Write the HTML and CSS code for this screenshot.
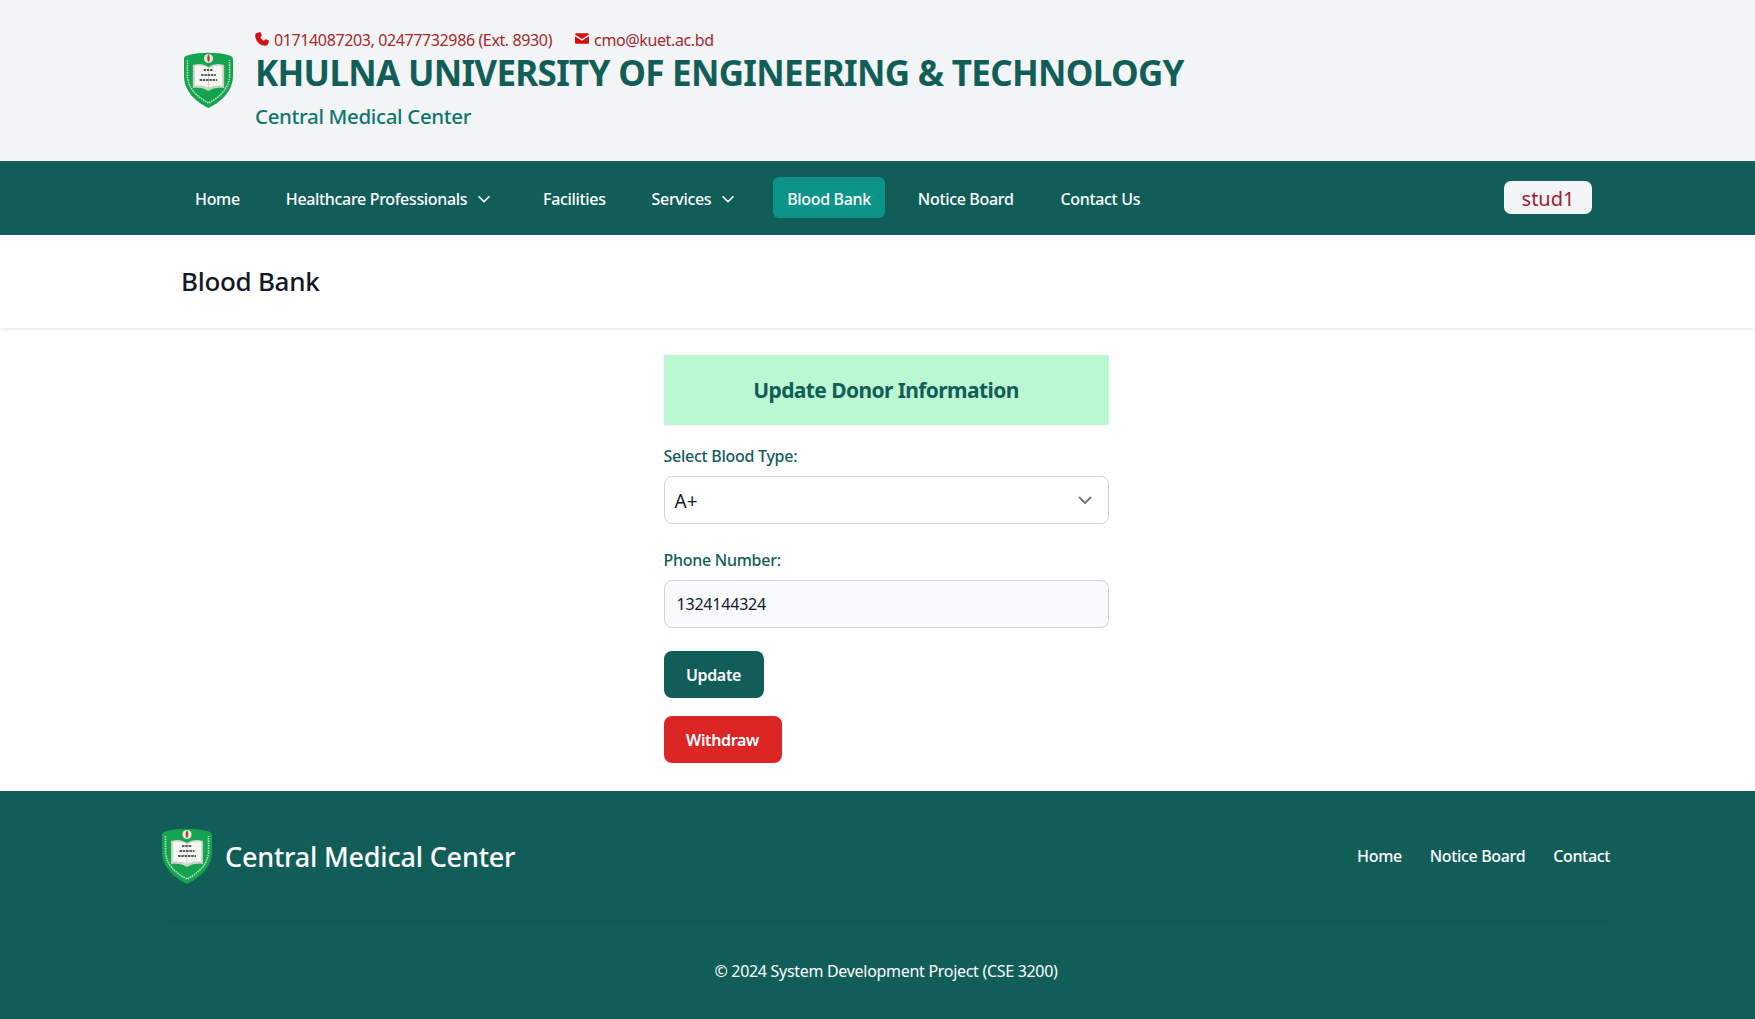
FILE: index.html
```html
<!DOCTYPE html>
<html lang="en">
<head>
<meta charset="utf-8">
<title>Blood Bank</title>
<link rel="stylesheet" href="styles.css">
</head>
<body>
<svg class="defs" width="0" height="0" aria-hidden="true">
  <symbol id="crest" viewBox="0 0 50 56" preserveAspectRatio="none">
    <path d="M5 3 C16 0 34 0 45 3 C49 4 50 5 50 8 L50 24 C50 40 36 51 25 56 C14 51 0 40 0 24 L0 8 C0 5 1 4 5 3Z" fill="#16a34f"/>
    <path d="M3.5 8 L3.5 25 C5 38 15 46 25 51 C35 46 45 38 46.5 25 L46.5 8" fill="none" stroke="#c9ecd3" stroke-width="1.6" stroke-dasharray="1.6 .8" opacity=".85"/>
    <circle cx="25" cy="6.5" r="4.6" fill="#d7efdc"/>
    <path d="M9 13 C15 11 21 12 25 15 C29 12 35 11 41 13 L41 36 C35 35 29 36 25 39 C21 36 15 35 9 36Z" fill="#c9d2c9"/>
    <path d="M11 14 C16 13 21 14 24.5 16 L24.5 35.5 C21 34 16 33 11 34Z" fill="#f6f6f2"/>
    <path d="M39 14 C34 13 29 14 25.500 16 L25.500 35.500 C29 34 34 33 39 34Z" fill="#f6f6f2"/>
    <path d="M20 18 H30 M17.500 23 H32.500 M16 28 H34" stroke="#5a5a5a" stroke-width="2" stroke-dasharray="2.500 .8"/>
    <path d="M25 2 C26.800 4.500 26.800 8 25 10.500 C23.200 8 23.200 4.500 25 2Z" fill="#c8322e"/>
  </symbol>
  <symbol id="chev" viewBox="0 0 20 20">
    <path d="M4.500 7.500 L10 13 L15.500 7.500" fill="none" stroke="currentColor" stroke-width="1.800" stroke-linecap="round" stroke-linejoin="round"/>
  </symbol>
</svg>

<header class="top">
  <svg class="crest"><use href="#crest"/></svg>
  <div class="top-text">
    <div class="contact">
      <span class="contact-item">
        <svg class="ci ci-phone" viewBox="0 0 16 16"><path d="M3.600.6 L5.600.2 C6 .1 6.300.3 6.500.7 L7.700 3.600 C7.900 4 7.800 4.300 7.500 4.600 L6 5.800 C6.800 7.600 8.400 9.200 10.200 10 L11.400 8.500 C11.700 8.200 12 8.100 12.400 8.300 L15.300 9.500 C15.700 9.700 15.900 10 15.800 10.400 L15.400 12.400 C15 14.600 13.600 15.800 11.800 15.800 C5.500 15.400 .6 10.500.2 4.200 C.2 2.400 1.400 1 3.600.6Z"/></svg>
        01714087203, 02477732986 (Ext. 8930)
      </span>
      <span class="contact-item">
        <svg class="ci ci-mail" viewBox="0 0 16 12"><path d="M1.500 0 H14.500 C15.300 0 16 .7 16 1.500 L8 6.600 L0 1.500 C0 .7 .7 0 1.500 0Z M0 3.400 L8 8.500 L16 3.400 V10.500 C16 11.300 15.300 12 14.500 12 H1.500 C.7 12 0 11.300 0 10.500Z"/></svg>
        cmo@kuet.ac.bd
      </span>
    </div>
    <h1 class="uni">KHULNA UNIVERSITY OF ENGINEERING &amp; TECHNOLOGY</h1>
    <p class="sub">Central Medical Center</p>
  </div>
</header>

<nav class="nav">
  <ul class="menu">
    <li class="item">Home</li>
    <li class="item item-hp">Healthcare Professionals <svg class="chev"><use href="#chev"/></svg></li>
    <li class="item">Facilities</li>
    <li class="item item-sv">Services <svg class="chev"><use href="#chev"/></svg></li>
    <li class="item active">Blood Bank</li>
    <li class="item item-nb">Notice Board</li>
    <li class="item">Contact Us</li>
  </ul>
  <span class="user">stud1</span>
</nav>

<section class="title-bar"><h2 class="page-title">Blood Bank</h2></section>

<main class="main">
  <form class="card">
    <h3 class="card-head">Update Donor Information</h3>
    <label class="lbl lbl-first" for="bt">Select Blood Type:</label>
    <div class="select-box" id="bt"><span>A+</span><svg class="sel-chev"><use href="#chev"/></svg></div>
    <label class="lbl" for="ph">Phone Number:</label>
    <input class="field" id="ph" type="text" value="1324144324">
    <div class="actions">
      <button class="btn btn-up" type="button">Update</button>
      <button class="btn btn-wd" type="button">Withdraw</button>
    </div>
  </form>
</main>

<footer class="foot">
  <div class="foot-row">
    <div class="foot-brand">
      <svg class="crest crest-foot"><use href="#crest"/></svg>
      <span class="foot-name">Central Medical Center</span>
    </div>
    <div class="foot-links"><a>Home</a><a>Notice Board</a><a>Contact</a></div>
  </div>
  <div class="copy">© 2024 System Development Project (CSE 3200)</div>
</footer>
</body>
</html>
```
FILE: styles.css
```css
* { box-sizing: border-box; }
html, body { margin: 0; padding: 0; }
body { font-family: "Noto Sans", "Open Sans", sans-serif; background: #fff; color: #111827; height: 1019px; overflow: hidden; }
.defs { position: absolute; }
.top { height: 160.5px; background: #f3f4f6; display: flex; align-items: flex-start; padding: 30px 0 0 184px; }
.crest { width: 49px; height: 56px; flex: none; }
.top .crest { margin-top: 22px; }
.top-text { margin-left: 22px; }
.contact { display: flex; gap: 23px; font-size: 16px; line-height: 20px; color: #a5282c; letter-spacing: -0.38px; }
.contact-item { display: flex; align-items: center; gap: 5px; }
.ci { fill: #d50e12; flex: none; }
.ci-phone { width: 14px; height: 14px; margin-top: -3px; }
.ci-mail { width: 14px; height: 11px; margin-top: -4px; }
.uni { margin: 1px 0 0; font-size: 35px; line-height: 44px; font-weight: 700; color: #115e59; white-space: nowrap; letter-spacing: -0.7px; }
.sub { margin: 8px 0 0; font-size: 20.5px; line-height: 26px; font-weight: 500; color: #0f766e; letter-spacing: -0.35px; }
.nav { height: 74px; background: #115e59; display: flex; align-items: center; justify-content: space-between; padding: 0 163px 0 181px; }
.menu { list-style: none; margin: 0; padding: 0; display: flex; gap: 18px; align-items: center; color: #fff; font-size: 16px; font-weight: 500; letter-spacing: -0.33px; }
.item { height: 41px; padding: 2px 14px 0; display: flex; align-items: center; border-radius: 6px; white-space: pre; }
.item-hp { padding-right: 18px; }
.item-sv { padding-right: 18px; }
.item-nb { padding-left: 15px; padding-right: 15px; }
.chev { width: 18px; height: 18px; margin-left: 4px; }
.active { background: #0d9488; }
.user { width: 88px; height: 33px; padding-top: 1px; background: #f3f4f6; color: #9b2230; border-radius: 7px; display: flex; align-items: center; justify-content: center; font-size: 20px; }
.title-bar { height: 93px; padding: 0 181px; display: flex; align-items: center; box-shadow: 0 1px 4px rgba(0,0,0,.1); }
.page-title { margin: 0; font-size: 26px; font-weight: 500; color: #111827; letter-spacing: -0.3px; }
.main { height: 463px; padding: 27px 0 0 17px; display: flex; justify-content: center; }
.card { width: 445px; }
.card-head { margin: 0; height: 70px; background: #bbf7d0; color: #115e59; font-size: 21px; font-weight: 700; display: flex; align-items: center; justify-content: center; letter-spacing: -0.6px; }
.lbl { display: block; font-size: 16px; line-height: 20px; font-weight: 500; color: #115e59; margin-top: 26px; margin-bottom: 10px; letter-spacing: -0.27px; }
.lbl-first { margin-top: 21px; }
.select-box { height: 48px; border: 1px solid #d1d5db; border-radius: 8px; background: #fff; display: flex; align-items: center; justify-content: space-between; padding: 2px 13px 0 10px; font-size: 19px; color: #111827; }
.sel-chev { width: 20px; height: 20px; color: #6b7280; margin-top: -2px; }
.field { display: block; width: 100%; height: 48px; border: 1px solid #d1d5db; border-radius: 8px; background: #f9fafb; padding: 1px 12px 0; font: 16px "Noto Sans", sans-serif; letter-spacing: -0.2px; color: #111827; outline: none; }
.actions { display: flex; flex-direction: column; align-items: flex-start; gap: 18px; margin-top: 23px; }
.btn { height: 47px; border: 0; border-radius: 8px; color: #fff; font: 600 16px "Noto Sans", sans-serif; letter-spacing: -0.35px; padding: 2px 0 0; }
.btn-up { width: 100px; background: #115e59; }
.btn-wd { width: 118px; background: #dc2626; }
.foot { height: 228.5px; background: #115e59; color: #fff; padding: 0 145px 0 162px; }
.foot-row { height: 131px; border-bottom: 1px solid #1f4f4f; display: flex; align-items: flex-start; justify-content: space-between; padding-top: 37px; }
.foot-brand { display: flex; align-items: flex-start; gap: 13px; }
.crest-foot { width: 50px; height: 56px; }
.foot-name { font-size: 27px; line-height: 58px; font-weight: 500; letter-spacing: -0.2px; }
.foot-links { display: flex; gap: 28px; font-size: 16px; font-weight: 500; letter-spacing: -0.35px; line-height: 22px; margin-top: 17px; }
.copy { text-align: center; font-size: 16px; letter-spacing: -0.3px; margin-top: 38px; line-height: 22px; }
```
